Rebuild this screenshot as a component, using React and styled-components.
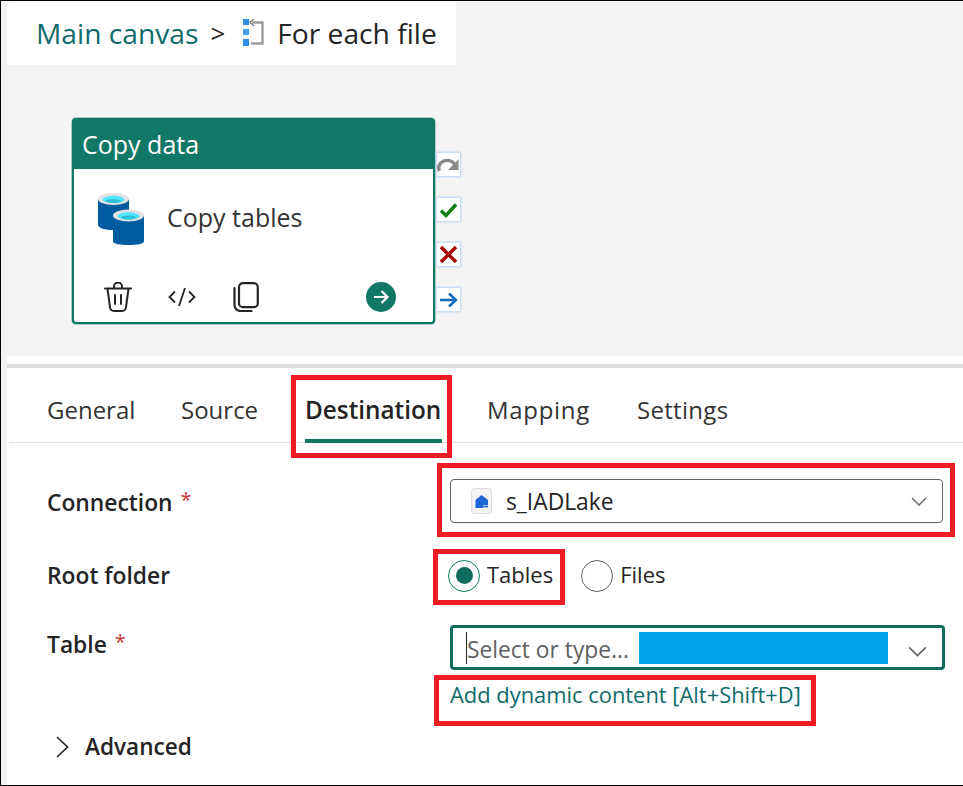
import React from "react";
import styled, { createGlobalStyle } from "styled-components";

const GlobalStyle = createGlobalStyle`
html, body {
  margin: 0;
  padding: 0;
  background: #fff;
}
body {
  font-family: "Open Sans", "Liberation Sans", sans-serif;
  color: #242424;
}
* {
  box-sizing: border-box;
}
`;

const green = "#117865";

const Frame = styled.div`
  width: 963px;
  height: 786px;
  overflow: hidden;
  display: flex;
  flex-direction: column;
  padding-left: 6px;
  background: #f1f1f1;
  border-top: 1px solid #000;
  border-left: 1px solid #000;
  border-bottom: 1px solid #000;
`;

const Canvas = styled.section`
  height: 355px;
  flex: none;
  background: #f4f4f4;
`;

const Breadcrumb = styled.nav`
  width: 449px;
  height: 64px;
  display: flex;
  align-items: center;
  padding-left: 29px;
  background: #fff;
  border-top-left-radius: 8px;
  font-size: 28.2px;
`;

const CrumbLink = styled.span`
  color: #0f6b6b;
`;

const CrumbSeparator = styled.span`
  margin: 0 18px 0 12px;
  font-size: 26px;
`;

const CrumbIcon = styled.svg`
  width: 21px;
  height: 28px;
  margin-right: 13px;
  flex: none;
`;

const Stage = styled.div`
  display: flex;
  align-items: flex-start;
  margin: 53px 0 0 65px;
`;

const ActivityCard = styled.article`
  width: 363px;
  height: 206px;
  display: flex;
  flex-direction: column;
  background: #fff;
  border: 2px solid ${green};
  border-radius: 4px;
  box-shadow: 0 0 0 0.5px #5fa597;
`;

const CardHeader = styled.header`
  height: 49px;
  display: flex;
  align-items: center;
  padding: 0 0 2px 8px;
  background: ${green};
  color: #fff;
  font-size: 25px;
`;

const CardBody = styled.div`
  height: 113px;
  display: flex;
  align-items: center;
  gap: 23px;
  padding: 0 0 14px 24px;
  font-size: 25px;
  color: #333;
`;

const CardTitle = styled.span`
  margin-bottom: 3px;
`;

const CardFooter = styled.div`
  display: flex;
  align-items: center;
  padding-left: 30px;
`;

const ToolIcon = styled.svg`
  width: ${(p) => p.$w}px;
  height: 30px;
  margin-right: ${(p) => p.$gap}px;
  flex: none;
`;

const SideButtons = styled.div`
  display: flex;
  flex-direction: column;
  gap: 22px;
  margin: 35px 0 0 2px;
`;

const SideButton = styled.div`
  width: 23px;
  height: 23px;
  display: flex;
  align-items: center;
  justify-content: center;
  background: #fff;
  box-shadow: 0 0 2px 1px #b4d4f3;
`;

const Panel = styled.section`
  flex: 1;
  padding-top: 8px;
  background: #fff;
`;

const Divider = styled.div`
  height: 4px;
  background: #e0e0e0;
`;

const Tabs = styled.div`
  height: 75px;
  display: flex;
  align-items: stretch;
  gap: 44px;
  margin-left: 2px;
  padding: 26px 0 0 37px;
  border-bottom: 1px solid #e0e0e0;
`;

const Tab = styled.div`
  width: ${(p) => p.$w}px;
  height: 49px;
  margin-bottom: -1px;
  padding-left: ${(p) => (p.$active ? 0 : 1)}px;
  line-height: 32px;
  font-size: ${(p) => (p.$active ? 24.3 : 24)}px;
  font-weight: ${(p) => (p.$active ? 600 : 400)};
  letter-spacing: ${(p) => p.$spacing || 0}px;
  white-space: nowrap;
  color: ${(p) => (p.$active ? "#242424" : "#333")};
  border-bottom: 4px solid ${(p) => (p.$active ? green : "transparent")};
`;

const Highlight = styled.div`
  position: relative;

  &::after {
    content: "";
    position: absolute;
    inset: ${(p) => p.$inset};
    border: 5px solid #ed1c24;
    pointer-events: none;
  }
`;

const Form = styled.div`
  padding: 36px 0 0 40px;
`;

const Row = styled.div`
  display: grid;
  grid-template-columns: 403px 495px;
  align-items: ${(p) => p.$align || "center"};
  margin-top: ${(p) => p.$top || 0}px;
`;

const Label = styled.label`
  font-size: 22.8px;
  line-height: 30px;
  font-weight: 600;
  color: #242424;
  padding-top: ${(p) => p.$pad || 0}px;
`;

const Required = styled.span`
  margin-left: 8px;
  color: #d13438;
  font-weight: 400;
  font-size: 20px;
  position: relative;
  top: -4px;
`;

const Select = styled.div`
  width: 493px;
  height: 44px;
  display: flex;
  align-items: center;
  padding: 0 15px 0 20px;
  border: 1px solid #616161;
  border-radius: 4px;
  font-size: 22.8px;
  background: #fff;
`;

const LakeTile = styled.svg`
  width: 21px;
  height: 26px;
  margin-right: 14px;
  flex: none;
`;

const SelectValue = styled.span`
  flex: 1;
`;

const Radios = styled.div`
  display: flex;
  align-items: center;
  margin-left: -2px;
`;

const RadioOption = styled.div`
  display: flex;
  align-items: center;
  gap: 7px;
  font-size: 22px;
  margin-left: ${(p) => p.$left || 0}px;
`;

const RadioText = styled.span`
  margin-bottom: 3px;
`;

const RadioCircle = styled.span`
  width: 32px;
  height: 32px;
  display: flex;
  align-items: center;
  justify-content: center;
  flex: none;
  border-radius: 50%;
  border: 1px solid ${(p) => (p.$on ? green : "#616161")};

  &::before {
    content: "";
    width: 17px;
    height: 17px;
    border-radius: 50%;
    background: ${(p) => (p.$on ? "#0f6b5c" : "transparent")};
  }
`;

const Combo = styled.div`
  width: 495px;
  height: 45px;
  display: flex;
  align-items: center;
  padding: 0 16px 0 13px;
  border: 3px solid #0f6b5c;
  border-radius: 4px;
`;

const Caret = styled.span`
  width: 1px;
  height: 32px;
  background: #242424;
  flex: none;
`;

const Placeholder = styled.span`
  font-size: 22.8px;
  color: #616161;
  white-space: nowrap;
  margin-top: 4px;
`;

const Redaction = styled.span`
  width: 249px;
  height: 32px;
  margin: 0 20px 0 10px;
  background: #00a4e8;
  flex: none;
`;

const LinkWrap = styled.div`
  width: 350px;
  margin-top: 12px;
`;

const DynamicLink = styled.a`
  display: block;
  font-size: 21.9px;
  line-height: 26px;
  white-space: nowrap;
  color: #0f6b6b;
`;

const Advanced = styled.div`
  display: flex;
  align-items: center;
  gap: 16px;
  margin: 23px 0 0 8px;
  font-size: 22.6px;
  font-weight: 600;
`;

const ChevronSvg = styled.svg`
  flex: none;
  margin-top: ${(p) => p.$drop || 0}px;
`;

const Chevron = ({ w = 16, h = 9, drop }) => (
  <ChevronSvg width={w} height={h} viewBox="0 0 16 9" $drop={drop}>
    <path d="M1 1 L8 8 L15 1" fill="none" stroke="#616161" strokeWidth="1.3" />
  </ChevronSvg>
);

const ExpandIcon = () => (
  <ChevronSvg width="14" height="22" viewBox="0 0 14 22">
    <path d="M2 1 L12.5 11 L2 21" fill="none" stroke="#242424" strokeWidth="1.7" />
  </ChevronSvg>
);

const ForEachIcon = () => (
  <CrumbIcon viewBox="0 0 21 28">
    <rect x="0" y="0" width="6" height="6" fill="#2e8fe6" />
    <rect x="0" y="10" width="6" height="6" fill="#46a0ee" />
    <rect x="0" y="20" width="6" height="7" fill="#2e8fe6" />
    <path d="M9 3.5 H19.5 V24.5 H8" fill="none" stroke="#9b9b9b" strokeWidth="2.4" />
    <path d="M11 0 L7 3.5 L11 7" fill="none" stroke="#8a8a8a" strokeWidth="1.6" />
  </CrumbIcon>
);

const DatabaseIcon = () => (
  <svg width="46" height="52" viewBox="0 0 46 52" style={{ flex: "none" }}>
    <path d="M0 6 V32 C0 35 7 37 15.5 37 S31 35 31 32 V6 Z" fill="#005ba1" />
    <ellipse cx="15.5" cy="6" rx="15.5" ry="6" fill="#e2e2e2" />
    <ellipse cx="15.5" cy="6.5" rx="11" ry="3.7" fill="#50e6ff" />
    <ellipse cx="15.5" cy="8" rx="7.5" ry="2" fill="#32bedd" />
    <path d="M15 23 V48 C15 51 22 52 30.5 52 S46 51 46 48 V23 Z" fill="#005ba1" />
    <ellipse cx="30.5" cy="22.5" rx="15.5" ry="6" fill="#e2e2e2" />
    <ellipse cx="30.5" cy="23" rx="11" ry="3.7" fill="#50e6ff" />
    <ellipse cx="30.5" cy="24.5" rx="7.5" ry="2" fill="#32bedd" />
  </svg>
);

const TrashIcon = () => (
  <ToolIcon $w={28} $gap={36} viewBox="0 0 28 30" fill="none" stroke="#242424" strokeWidth="2">
    <path d="M1 6.5 H27" strokeLinecap="round" />
    <path d="M10 6 V4.5 A3.5 3.5 0 0 1 18 4.5 V6" />
    <path d="M3.5 7 L6 25 A4 4 0 0 0 10 29 H18 A4 4 0 0 0 22 25 L24.5 7" />
    <path d="M11 13 V22 M17 13 V22" strokeLinecap="round" />
  </ToolIcon>
);

const CodeIcon = () => (
  <ToolIcon $w={28} $gap={37} viewBox="0 0 28 30" fill="none" stroke="#242424" strokeWidth="1.8">
    <path d="M7 9.5 L1.5 15 L7 20.5 M21 9.5 L26.5 15 L21 20.5" />
    <path d="M17 6 L11 24" />
  </ToolIcon>
);

const CopyIcon = () => (
  <ToolIcon $w={26} $gap={107} viewBox="0 0 26 30" fill="none" stroke="#242424" strokeWidth="2.2">
    <rect x="6" y="1.2" width="18.8" height="24" rx="4" />
    <path d="M1.5 6 V23 A6 6 0 0 0 7.5 29 H18.5" strokeLinecap="round" />
  </ToolIcon>
);

const GoIcon = () => (
  <svg width="30" height="30" viewBox="0 0 30 30" style={{ flex: "none" }}>
    <circle cx="15" cy="15" r="15" fill={green} />
    <path d="M8 15 H21 M15.5 9 L21.5 15 L15.5 21" fill="none" stroke="#fff" strokeWidth="2.2" />
  </svg>
);

const SkipIcon = () => (
  <svg width="23" height="18" viewBox="0 0 23 18">
    <path d="M2.5 15 A8.5 7.5 0 0 1 17.5 8" fill="none" stroke="#8a8a8a" strokeWidth="3.4" />
    <path d="M21.5 3 V14 H11 Z" fill="#8a8a8a" />
  </svg>
);

const CheckIcon = () => (
  <svg width="19" height="16" viewBox="0 0 19 16">
    <path d="M2 8.5 L7 13.5 L17 2.5" fill="none" stroke="#107c10" strokeWidth="3.4" />
  </svg>
);

const CrossIcon = () => (
  <svg width="19" height="19" viewBox="0 0 19 19">
    <path d="M2 2 L17 17 M17 2 L2 17" fill="none" stroke="#a80000" strokeWidth="3.4" />
  </svg>
);

const NextIcon = () => (
  <svg width="19" height="16" viewBox="0 0 19 16">
    <path d="M1 8 H17 M10 1.5 L17 8 L10 14.5" fill="none" stroke="#0f6cbd" strokeWidth="2.4" />
  </svg>
);

const LakeIcon = () => (
  <LakeTile viewBox="0 0 21 26">
    <rect x="0.5" y="0.5" width="20" height="25" rx="3" fill="#f3f3f3" stroke="#dcdcdc" />
    <path d="M4.5 12 L10.5 7 L17 12 V20 H4.5 Z" fill="#1f66d6" />
    <path d="M12 17.5 H18 M12 19.5 H18" stroke="#c8d8f0" strokeWidth="0.8" />
  </LakeTile>
);

export default function App() {
  return (
    <>
      <GlobalStyle />
      <Frame>
        <Canvas>
          <Breadcrumb>
            <CrumbLink>Main canvas</CrumbLink>
            <CrumbSeparator>&gt;</CrumbSeparator>
            <ForEachIcon />
            <span>For each file</span>
          </Breadcrumb>
          <Stage>
            <ActivityCard>
              <CardHeader>Copy data</CardHeader>
              <CardBody>
                <DatabaseIcon />
                <CardTitle>Copy tables</CardTitle>
              </CardBody>
              <CardFooter>
                <TrashIcon />
                <CodeIcon />
                <CopyIcon />
                <GoIcon />
              </CardFooter>
            </ActivityCard>
            <SideButtons>
              <SideButton><SkipIcon /></SideButton>
              <SideButton><CheckIcon /></SideButton>
              <SideButton><CrossIcon /></SideButton>
              <SideButton><NextIcon /></SideButton>
            </SideButtons>
          </Stage>
        </Canvas>
        <Panel>
          <Divider />
          <Tabs>
            <Tab $w={90}>General</Tab>
            <Tab $w={81}>Source</Tab>
            <Highlight $inset="-19px -10px -16px -14px">
              <Tab $active $w={137}>Destination</Tab>
            </Highlight>
            <Tab $w={106} $spacing={0.7}>Mapping</Tab>
            <Tab $w={94} $spacing={0.3}>Settings</Tab>
          </Tabs>
          <Form>
            <Row>
              <Label $pad={4}>Connection<Required>*</Required></Label>
              <Highlight $inset="-16px -10px -14px -13px">
                <Select>
                  <LakeIcon />
                  <SelectValue>s_IADLake</SelectValue>
                  <Chevron />
                </Select>
              </Highlight>
            </Row>
            <Row $top={36}>
              <Label>Root folder</Label>
              <Radios>
                <Highlight $inset="-10px -12px -13px -15px">
                  <RadioOption>
                    <RadioCircle $on />
                    <RadioText>Tables</RadioText>
                  </RadioOption>
                </Highlight>
                <RadioOption $left={28}>
                  <RadioCircle />
                  <RadioText>Files</RadioText>
                </RadioOption>
              </Radios>
            </Row>
            <Row $top={33} $align="start">
              <Label $pad={5}>Table<Required>*</Required></Label>
              <div>
                <Combo>
                  <Caret />
                  <Placeholder>Select or type...</Placeholder>
                  <Redaction />
                  <Chevron w={19} h={11} drop={8} />
                </Combo>
                <LinkWrap>
                  <Highlight $inset="-7px -16px -18px -16px">
                    <DynamicLink>Add dynamic content [Alt+Shift+D]</DynamicLink>
                  </Highlight>
                </LinkWrap>
              </div>
            </Row>
            <Advanced>
              <ExpandIcon />
              Advanced
            </Advanced>
          </Form>
        </Panel>
      </Frame>
    </>
  );
}
